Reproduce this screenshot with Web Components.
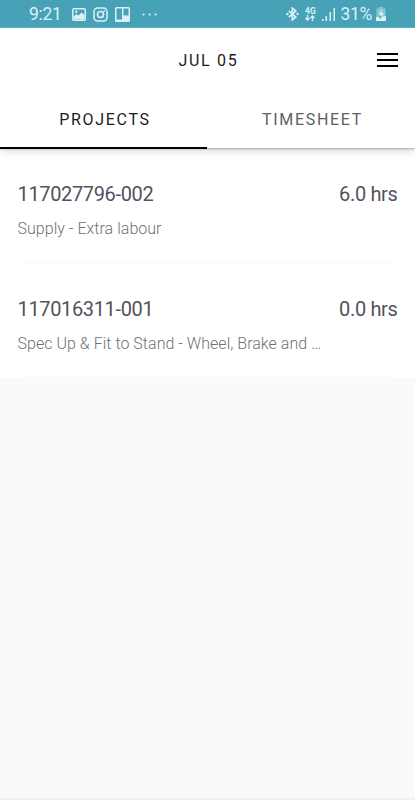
<!DOCTYPE html>
<html lang="en">
<head>
<meta charset="utf-8">
<title>Projects</title>
<style>
  body {
    margin: 0;
    font-family: Roboto, "Liberation Sans", sans-serif;
    background: #fafafa;
  }
</style>
</head>
<body>
<app-screen>
  <status-bar slot="top" time="9:21" battery="31%"></status-bar>
  <app-header slot="top">JUL 05</app-header>
  <tab-bar slot="top">
    <tab-item active>PROJECTS</tab-item>
    <tab-item>TIMESHEET</tab-item>
  </tab-bar>
  <project-row>
    <span slot="code">117027796-002</span>
    <span slot="hours">6.0 hrs</span>
    <span slot="description">Supply - Extra labour</span>
  </project-row>
  <project-row>
    <span slot="code">117016311-001</span>
    <span slot="hours">0.0 hrs</span>
    <span slot="description">Spec Up &amp; Fit to Stand - Wheel, Brake and …</span>
  </project-row>
</app-screen>

<script>
class AppScreen extends HTMLElement {
  constructor() {
    super();

    this.attachShadow({ mode: 'open' });
  }

  connectedCallback() {
    this.shadowRoot.innerHTML = `
      <style>
        :host {
          display: flex;
          flex-direction: column;
          box-sizing: border-box;
          height: 100vh;
          overflow: hidden;
          background: #fafafa;
          border-bottom: 2px solid #f1f1f1;
        }
        .top {
          flex: none;
          z-index: 1;
          background: #fff;
          box-shadow: 0 1px 2px rgba(0, 0, 0, .25), 0 3px 8px rgba(0, 0, 0, .15);
        }
      </style>
      <div class="top"><slot name="top"></slot></div>
      <main><slot></slot></main>
    `;
  }
}

class StatusBar extends HTMLElement {
  constructor() {
    super();

    this.attachShadow({ mode: 'open' });
  }

  connectedCallback() {
    this.shadowRoot.innerHTML = `
      <style>
        :host {
          display: flex;
          justify-content: space-between;
          box-sizing: border-box;
          height: 28px;
          padding: 1px 29px 0 29px;
          background: #47a2b8;
          border-bottom: 1px solid #60afc2;
          color: #d9f1f6;
          font-size: 17.5px;
          line-height: 26px;
        }
        div {
          display: flex;
          align-items: center;
        }
        svg {
          display: block;
          flex: none;
          fill: none;
          stroke: currentColor;
        }
        .solid {
          fill: currentColor;
          stroke: none;
        }
        .time {
          width: 43px;
          letter-spacing: -.3px;
        }
        .camera { margin-left: 7px; }
        .board { margin-left: 7px; }
        .dots { margin-left: 12px; }
        .network {
          flex-direction: column;
          width: 12px;
          margin: 0 6px 0 5px;
          font-size: 8.5px;
          font-weight: 700;
          line-height: 8px;
        }
        .percent {
          margin-left: 5px;
          letter-spacing: -.3px;
        }
        .battery { margin-left: 4px; }
      </style>
      <div>
        <span class="time">${this.getAttribute('time')}</span>
        <svg class="image" width="14" height="13" viewBox="0 0 14 13">
          <rect x=".8" y=".8" width="12.4" height="11.4" rx="1" stroke-width="1.5"/>
          <path class="solid" d="M1.5 11.500V8.500l3-2.500 2 1.500 3-3L12.500 7v4.500z"/>
          <circle class="solid" cx="4.200" cy="3.800" r="1.200"/>
        </svg>
        <svg class="camera" width="15" height="15" viewBox="0 0 15 15">
          <rect x="1" y="1" width="13" height="13" rx="3.5" stroke-width="1.5"/>
          <circle cx="7.5" cy="7.5" r="3" stroke-width="1.7"/>
          <circle class="solid" cx="11.2" cy="3.9" r=".9"/>
        </svg>
        <svg class="board" width="15" height="15" viewBox="0 0 15 15">
          <path class="solid" fill-rule="evenodd" d="M1.5 0h12A1.5 1.5 0 0 1 15 1.5v12a1.5 1.5 0 0 1-1.5 1.500h-12A1.5 1.5 0 0 1 0 13.500v-12A1.5 1.5 0 0 1 1.500 0zM1.500 1.500v11h5.500v-11zM8.500 1.500V8.500h5v-7z"/>
        </svg>
        <svg class="dots" width="15" height="3" viewBox="0 0 15 3">
          <g class="solid">
            <circle cx="1.600" cy="1.500" r="1.100"/>
            <circle cx="7.600" cy="1.500" r="1.100"/>
            <circle cx="13.600" cy="1.500" r="1.100"/>
          </g>
        </svg>
      </div>
      <div>
        <svg width="13" height="14" viewBox="0 0 13 14">
          <path d="M2.800 3.800l7 6.200-3.500 3V1l3.500 3-7 6.200" stroke-width="1.700"/>
          <circle class="solid" cx="1.400" cy="7" r="1.200"/>
          <circle class="solid" cx="11.600" cy="7" r="1.200"/>
        </svg>
        <div class="network">
          <span>4G</span>
          <svg width="10" height="6" viewBox="0 0 10 6">
            <path d="M2.500 0v5M.500 3l2 2 2-2M7.500 6V1M5.500 3l2-2 2 2" stroke-width="1.400"/>
          </svg>
        </div>
        <svg width="13" height="13" viewBox="0 0 13 13">
          <path class="solid" d="M0 11h1.500v2H0zM3.500 8H5v5H3.500zM7.500 4H9v9H7.500zM11.500 0H13v13h-1.500z"/>
        </svg>
        <span class="percent">${this.getAttribute('battery')}</span>
        <svg class="battery" width="10" height="14" viewBox="0 0 10 14">
          <path class="solid" d="M3 0h4v1.500h2.500V14H.500V1.500H3z" opacity=".45"/>
          <path class="solid" d="M0 10h4l6-1v5H0zM6 2.500L2.500 7.500h2.500L4 11.500l4-5.500H5.500z"/>
          <path d="M3.500 9.500h2l-1.500 2.500z" fill="#3c6f7c" stroke="none"/>
        </svg>
      </div>
    `;
  }
}

class AppHeader extends HTMLElement {
  constructor() {
    super();

    this.attachShadow({ mode: 'open' });
  }

  connectedCallback() {
    this.shadowRoot.innerHTML = `
      <style>
        :host {
          display: grid;
          grid-template-columns: 1fr auto 1fr;
          align-items: center;
          height: 64px;
          padding: 0 17px;
          background: #fff;
          color: #1c1c1c;
          font-size: 16px;
          letter-spacing: 1.7px;
        }
        .title {
          grid-column: 2;
          padding-left: 2px;
        }
        svg {
          display: block;
          justify-self: end;
          fill: #000;
        }
      </style>
      <span class="title"><slot></slot></span>
      <svg width="21" height="14" viewBox="0 0 21 14">
        <path d="M0 0h21v2H0zM0 6h21v2H0zM0 12h21v2H0z"/>
      </svg>
    `;
  }
}

class TabBar extends HTMLElement {
  constructor() {
    super();

    this.attachShadow({ mode: 'open' });
  }

  connectedCallback() {
    this.shadowRoot.innerHTML = `
      <style>
        :host {
          display: grid;
          grid-template-columns: 207px 1fr;
          height: 56px;
          background: #fff;
        }
      </style>
      <slot></slot>
    `;
  }
}

class TabItem extends HTMLElement {
  constructor() {
    super();

    this.attachShadow({ mode: 'open' });
  }

  connectedCallback() {
    this.shadowRoot.innerHTML = `
      <style>
        :host {
          box-sizing: border-box;
          padding: 1px 0 0 3px;
          border-bottom: 2px solid transparent;
          color: #606060;
          font-size: 16px;
          line-height: 54px;
          letter-spacing: 1.7px;
          text-align: center;
        }
        :host([active]) {
          border-color: #000;
          color: #1c1c1c;
        }
      </style>
      <slot></slot>
    `;
  }
}

class ProjectRow extends HTMLElement {
  constructor() {
    super();

    this.attachShadow({ mode: 'open' });
  }

  connectedCallback() {
    this.shadowRoot.innerHTML = `
      <style>
        :host {
          display: block;
          box-sizing: border-box;
          height: 115px;
          padding: 34px 17.5px 0;
          background: #fff linear-gradient(#f7f7f7, #f7f7f7) 24px 100% / calc(100% - 47px) 1px no-repeat;
        }
        .line {
          display: flex;
          justify-content: space-between;
          color: #53525d;
          font-size: 20px;
          line-height: 24px;
          letter-spacing: -.35px;
        }
        .description {
          margin-top: 13px;
          color: #707176;
          font-size: 16px;
          font-weight: 300;
          line-height: 20px;
          letter-spacing: .03px;
          white-space: nowrap;
        }
      </style>
      <div class="line">
        <slot name="code"></slot>
        <slot name="hours"></slot>
      </div>
      <div class="description"><slot name="description"></slot></div>
    `;
  }
}

customElements.define('app-screen', AppScreen);
customElements.define('status-bar', StatusBar);
customElements.define('app-header', AppHeader);
customElements.define('tab-bar', TabBar);
customElements.define('tab-item', TabItem);
customElements.define('project-row', ProjectRow);
</script>
</body>
</html>
